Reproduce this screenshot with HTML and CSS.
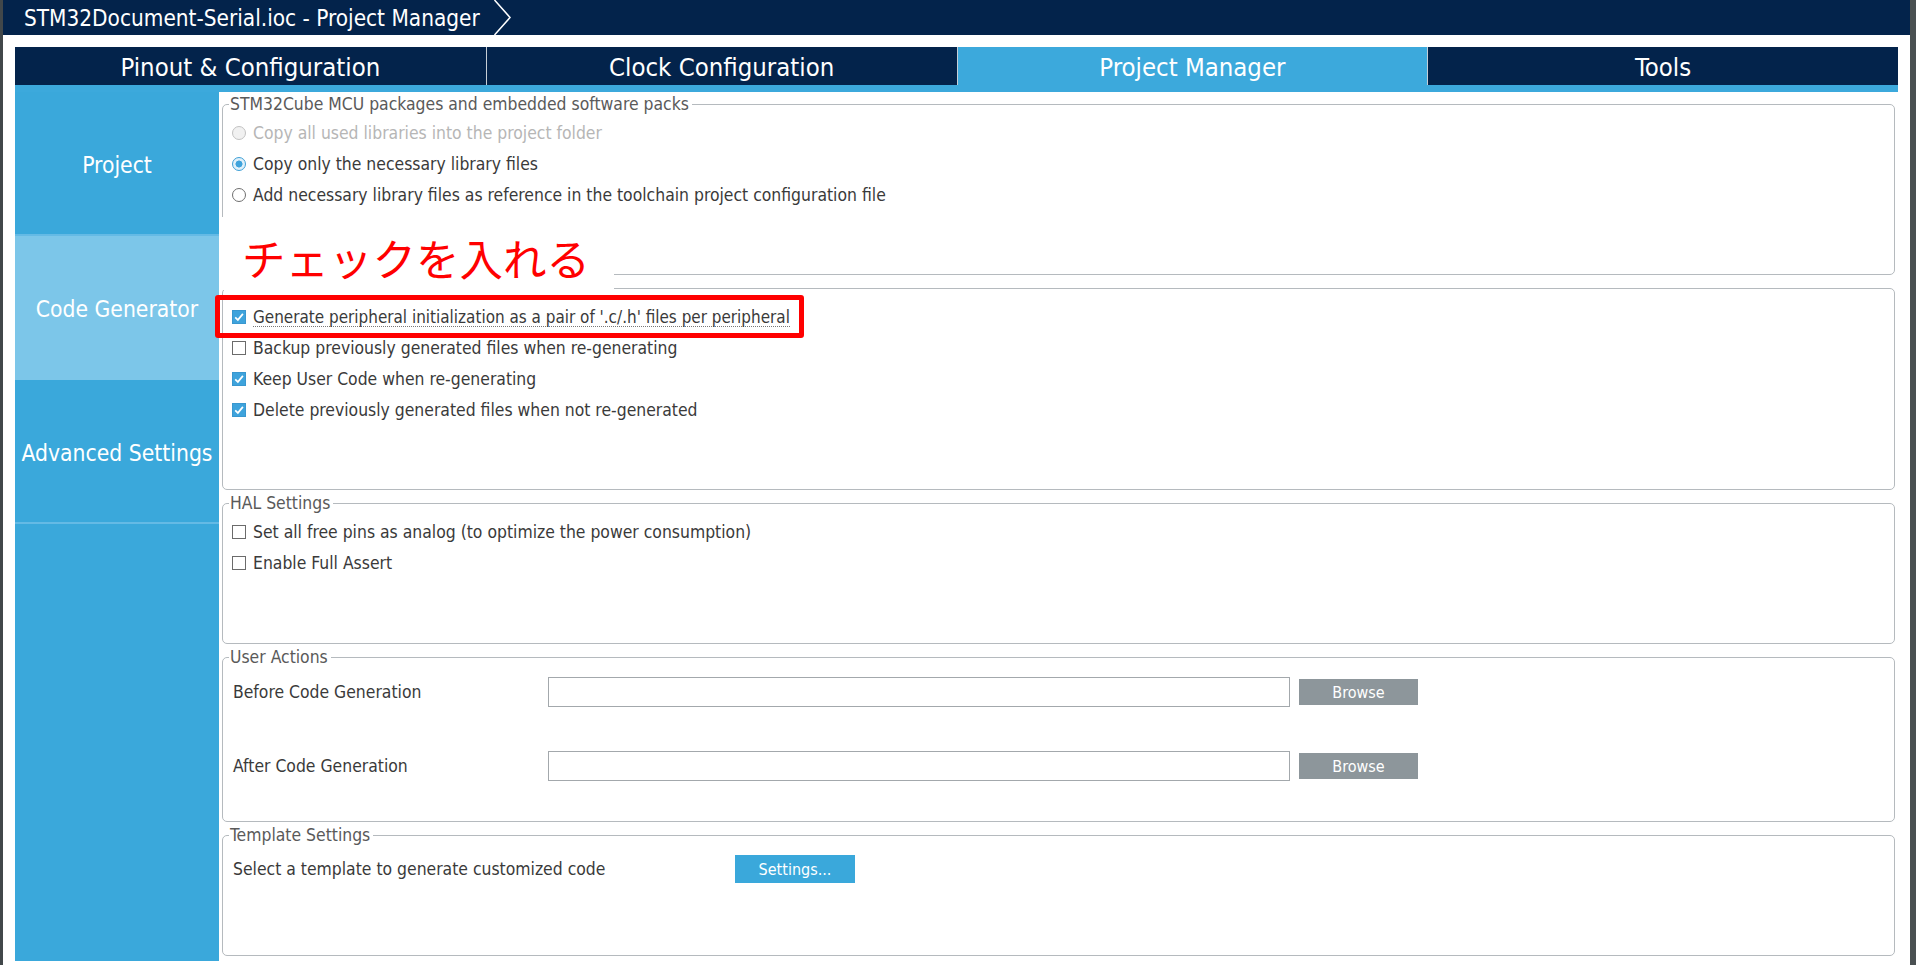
FILE: index.html
```html
<!DOCTYPE html>
<html lang="en">
<head>
<meta charset="utf-8">
<title>STM32Document-Serial.ioc - Project Manager</title>
<link rel="stylesheet" href="styles.css">
</head>
<body>
<div class="app">
  <header class="titlebar">
    <span class="crumb">STM32Document-Serial.ioc - Project Manager</span>
    <svg class="chev" width="20" height="35" viewBox="0 0 20 35"><polyline points="1.5,0 17,17.5 1.5,35" fill="none" stroke="#ffffff" stroke-width="1.5"/></svg>
  </header>
  <nav class="tabs">
    <div class="tab">Pinout &amp; Configuration</div>
    <div class="tab">Clock Configuration</div>
    <div class="tab active">Project Manager</div>
    <div class="tab">Tools</div>
  </nav>
  <div class="tab-strip"></div>
  <div class="main">
    <aside class="sidebar">
      <div class="side-item">Project</div>
      <div class="side-item selected">Code Generator</div>
      <div class="side-item">Advanced Settings</div>
    </aside>
    <section class="content">
      <div class="box box-packs">
        <div class="box-title">STM32Cube MCU packages and embedded software packs</div>
        <div class="opts">
          <div class="opt disabled"><span class="radio"></span>Copy all used libraries into the project folder</div>
          <div class="opt"><span class="radio checked"></span>Copy only the necessary library files</div>
          <div class="opt"><span class="radio"></span>Add necessary library files as reference in the toolchain project configuration file</div>
        </div>
      </div>
      <div class="box box-gen">
        <div class="box-title box-title-empty"></div>
        <div class="opts">
          <div class="opt"><svg class="cb" viewBox="0 0 14 14"><rect x="0.5" y="0.5" width="13" height="13" fill="#3ea3dc" stroke="#3997cf"/><path d="M3.2 7.3 L5.9 9.9 L10.9 3.9" fill="none" stroke="#ffffff" stroke-width="1.7"/></svg><span class="focus">Generate peripheral initialization as a pair of '.c/.h' files per peripheral</span></div>
          <div class="opt"><svg class="cb" viewBox="0 0 14 14"><rect x="0.5" y="0.5" width="13" height="13" fill="#ffffff" stroke="#6b6b6b"/></svg>Backup previously generated files when re-generating</div>
          <div class="opt"><svg class="cb" viewBox="0 0 14 14"><rect x="0.5" y="0.5" width="13" height="13" fill="#3ea3dc" stroke="#3997cf"/><path d="M3.2 7.3 L5.9 9.9 L10.9 3.9" fill="none" stroke="#ffffff" stroke-width="1.7"/></svg>Keep User Code when re-generating</div>
          <div class="opt"><svg class="cb" viewBox="0 0 14 14"><rect x="0.5" y="0.5" width="13" height="13" fill="#3ea3dc" stroke="#3997cf"/><path d="M3.2 7.3 L5.9 9.9 L10.9 3.9" fill="none" stroke="#ffffff" stroke-width="1.7"/></svg>Delete previously generated files when not re-generated</div>
        </div>
      </div>
      <div class="box box-hal">
        <div class="box-title">HAL Settings</div>
        <div class="opts">
          <div class="opt"><svg class="cb" viewBox="0 0 14 14"><rect x="0.5" y="0.5" width="13" height="13" fill="#ffffff" stroke="#6b6b6b"/></svg>Set all free pins as analog (to optimize the power consumption)</div>
          <div class="opt"><svg class="cb" viewBox="0 0 14 14"><rect x="0.5" y="0.5" width="13" height="13" fill="#ffffff" stroke="#6b6b6b"/></svg>Enable Full Assert</div>
        </div>
      </div>
      <div class="box box-actions">
        <div class="box-title">User Actions</div>
        <div class="field-rows">
          <div class="field">
            <span class="field-label">Before Code Generation</span>
            <span class="input"></span>
            <span class="btn btn-gray">Browse</span>
          </div>
          <div class="field">
            <span class="field-label">After Code Generation</span>
            <span class="input"></span>
            <span class="btn btn-gray">Browse</span>
          </div>
        </div>
      </div>
      <div class="box box-template">
        <div class="box-title">Template Settings</div>
        <div class="field-rows">
          <div class="field">
            <span class="field-label wide">Select a template to generate customized code</span>
            <span class="btn btn-blue">Settings...</span>
          </div>
        </div>
      </div>
    </section>
  </div>
  <div class="note">チェックを入れる</div>
  <div class="highlight"></div>
</div>
</body>
</html>
```

FILE: styles.css
```css
html, body {
  margin: 0;
  padding: 0;
  background: #ffffff;
}

body {
  width: 1916px;
  height: 965px;
  overflow: hidden;
  font-family: "DejaVu Sans", "Liberation Sans", sans-serif;
  font-stretch: condensed;
}

.app {
  position: relative;
  box-sizing: border-box;
  width: 1916px;
  height: 965px;
  border-left: 3px solid #41474a;
  border-right: 6px solid #4a5052;
  display: flex;
  flex-direction: column;
  background: #ffffff;
}

.titlebar {
  height: 35px;
  flex: 0 0 35px;
  background: #03234b;
  color: #ffffff;
  display: flex;
  align-items: center;
  padding-left: 21px;
  font-size: 22.4px;
}

.chev {
  margin-left: 13px;
  display: block;
}

.tabs {
  margin: 12px 12px 0 12px;
  height: 38px;
  flex: 0 0 38px;
  display: grid;
  grid-template-columns: repeat(4, 1fr);
  background: #03234b;
}

.tab {
  display: flex;
  align-items: center;
  justify-content: center;
  color: #ffffff;
  font-size: 25.5px;
  padding-top: 1px;
}

.tab + .tab {
  border-left: 1px solid #c6ced6;
}

.tab.active {
  background: #3ca9dc;
}

.tab-strip {
  margin: 0 12px;
  height: 7px;
  flex: 0 0 7px;
  background: #3ca9dc;
}

.main {
  display: flex;
  margin-left: 12px;
  height: 869px;
  flex: 0 0 869px;
}

.sidebar {
  width: 204px;
  flex: 0 0 204px;
  background: #3aa8db;
  display: flex;
  flex-direction: column;
}

.side-item {
  box-sizing: border-box;
  height: 144px;
  padding-top: 4px;
  border-bottom: 2px solid #64bae5;
  display: flex;
  align-items: center;
  justify-content: center;
  color: #ffffff;
  font-size: 22.7px;
  white-space: nowrap;
}

.side-item.selected {
  background: #7cc6e9;
  border-bottom-color: #7cc6e9;
}

.content {
  flex: 1;
  padding: 12px 15px 0 3px;
  display: flex;
  flex-direction: column;
  gap: 13px;
}

.box {
  box-sizing: border-box;
  border: 1px solid #b5babe;
  border-radius: 5px;
  padding: 0 10px;
  color: #3a3a3a;
  font-size: 17.4px;
}

.box-packs { height: 171px; }
.box-gen { height: 202px; }
.box-hal { height: 141px; }
.box-actions { height: 165px; }
.box-template { height: 121px; }

.box-title {
  width: max-content;
  margin: -10px 0 0 -4px;
  height: 18px;
  line-height: 18px;
  padding: 0 3px 0 1px;
  background: #ffffff;
  color: #5a5a5a;
}

.box-title-empty {
  width: 10px;
}

.opts {
  padding-top: 4px;
}

.opt {
  height: 31px;
  display: flex;
  align-items: center;
  gap: 7px;
  white-space: nowrap;
}

.opt.disabled {
  color: #b6b6b6;
}

.radio {
  box-sizing: border-box;
  width: 14px;
  height: 14px;
  border-radius: 50%;
  border: 1px solid #6f6f6f;
  background: #ffffff;
  flex: 0 0 14px;
  margin-left: -1px;
}

.opt.disabled .radio {
  border-color: #c2c2c2;
  background: #f1f1f1;
}

.radio.checked {
  border-color: #3e9fd6;
  background: radial-gradient(circle, #3ea3dc 0 3.2px, #dff0fa 3.8px);
}

.cb {
  width: 14px;
  height: 14px;
  flex: 0 0 14px;
  margin-left: -1px;
  display: block;
}

.focus {
  font-size: 16.95px;
  border-bottom: 1px dotted #777777;
  line-height: 17px;
  margin-top: 3px;
}

.field-rows {
  padding-top: 11px;
  display: flex;
  flex-direction: column;
  gap: 44px;
}

.field {
  display: flex;
  align-items: center;
  height: 30px;
}

.box-template .field {
  height: 28px;
}

.field-label {
  width: 315px;
  flex: 0 0 315px;
  white-space: nowrap;
}

.field-label.wide {
  width: 502px;
  flex: 0 0 502px;
}

.input {
  box-sizing: border-box;
  width: 742px;
  height: 30px;
  border: 1px solid #a3a8ac;
  background: #ffffff;
}

.btn {
  box-sizing: border-box;
  display: flex;
  align-items: center;
  justify-content: center;
  color: #ffffff;
  font-size: 16px;
}

.btn-gray {
  width: 119px;
  height: 26px;
  margin-left: 9px;
  background: #8d969b;
}

.btn-blue {
  width: 120px;
  height: 28px;
  background: #3aa8db;
}

.note {
  position: absolute;
  left: 216px;
  top: 217px;
  width: 395px;
  height: 73px;
  box-sizing: border-box;
  padding: 17px 0 0 23px;
  background: #ffffff;
  color: #ff0000;
  font-family: "Noto Sans CJK JP", "Noto Sans CJK SC", sans-serif;
  font-stretch: normal;
  font-size: 43.5px;
  line-height: 48px;
  white-space: nowrap;
}

.highlight {
  position: absolute;
  left: 212px;
  top: 295px;
  width: 589px;
  height: 43px;
  box-sizing: border-box;
  border: 5px solid #ff0000;
  border-radius: 3px;
}
```
